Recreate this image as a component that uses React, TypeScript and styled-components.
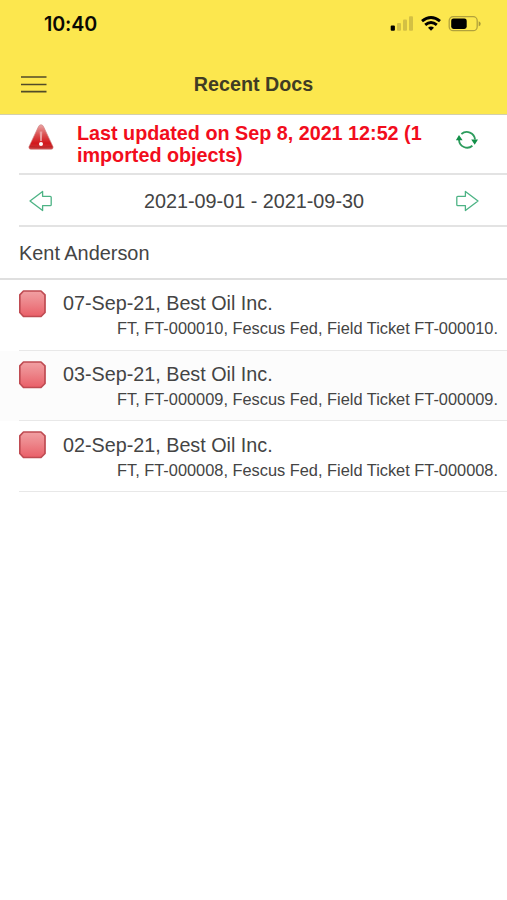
import React from 'react';
import styled, { createGlobalStyle } from 'styled-components';

const GlobalStyle = createGlobalStyle`
  * { box-sizing: border-box; }
  body {
    margin: 0;
    background: #fff;
    font-family: "Liberation Sans", Arial, sans-serif;
    color: #444;
  }
`;

const Screen = styled.main`
  display: flex;
  flex-direction: column;
  width: 507px;
  height: 900px;
  overflow: hidden;
  background: #fff;
`;

const Header = styled.header`
  height: 115px;
  background: #fce74e;
  border-bottom: 1px solid #d3cfad;
`;

const StatusBar = styled.div`
  display: flex;
  align-items: center;
  justify-content: space-between;
  height: 48px;
  padding: 0 25px 0 44px;
`;

const Clock = styled.time`
  font: 600 19.7px/24px Inter, sans-serif;
  letter-spacing: -0.1px;
  color: #090804;
`;

const StatusIcons = styled.svg`
  display: block;
`;

const NavBar = styled.div`
  display: grid;
  grid-template-columns: 60px 1fr 60px;
  align-items: center;
  height: 66px;
  padding: 6px 0 0;
`;

const MenuButton = styled.button`
  width: 26px;
  margin: 0 0 0 21px;
  padding: 0;
  border: 0;
  background: none;
  svg { display: block; }
`;

const Title = styled.h1`
  margin: 0;
  text-align: center;
  font-size: 19.7px;
  line-height: 24px;
  color: #403c24;
`;

const Row = styled.section<{ $height: number }>`
  display: grid;
  grid-template-columns: 44px 1fr 80px;
  height: ${(p) => p.$height}px;
  margin-left: 19px;
  border-bottom: 2px solid #e3e3e3;
`;

const IconCell = styled.div<{ $top: number; $left: number }>`
  padding: ${(p) => p.$top}px 0 0 ${(p) => p.$left}px;
  svg { display: block; }
`;

const Notice = styled.p`
  margin: 0;
  padding: 7px 0 0 14px;
  font-size: 19.75px;
  font-weight: 700;
  line-height: 22px;
  white-space: nowrap;
  color: #f20d1c;
`;

const Period = styled.div`
  align-self: center;
  text-align: center;
  padding: 1px 0 0 18px;
  font-size: 19.8px;
  line-height: 24px;
`;

const Person = styled.h2`
  margin: 0;
  height: 53px;
  padding: 14px 0 0 19px;
  border-bottom: 2px solid #dfdfdf;
  font-size: 19.9px;
  font-weight: 400;
  line-height: 24px;
`;

const DocList = styled.ul`
  margin: 0;
  padding: 0;
  list-style: none;
`;

const DocItem = styled.li<{ $shaded: boolean }>`
  padding-left: 19px;
  background: ${(p) => (p.$shaded ? '#fcfcfc' : '#fff')};
`;

const DocBody = styled.div`
  display: grid;
  grid-template-columns: 44px 1fr;
  height: 70.7px;
  border-bottom: 1.4px solid #e8e8e8;
`;

const StatusMark = styled.div`
  padding-top: 10px;
  svg { display: block; }
`;

const DocTitle = styled.div`
  padding-top: 11.3px;
  font-size: 19.75px;
  line-height: 24px;
`;

const DocDetail = styled.div`
  padding: 2px 0 0 54px;
  font-size: 16.37px;
  line-height: 22px;
  white-space: nowrap;
`;

const docs = [
  { date: '07-Sep-21', number: '000010' },
  { date: '03-Sep-21', number: '000009' },
  { date: '02-Sep-21', number: '000008' },
];

const WarningIcon = () => (
  <svg width="28" height="28" viewBox="0 0 28 28">
    <defs>
      <linearGradient id="warn" x1="0" y1="0" x2="0" y2="1">
        <stop offset="0" stopColor="#eaa5a5" />
        <stop offset=".4" stopColor="#da5050" />
        <stop offset=".75" stopColor="#d3171c" />
        <stop offset="1" stopColor="#c93a3a" />
      </linearGradient>
    </defs>
    <path d="M14 1.8c1.3 0 2 .8 2.600 2l9.200 19.400c.7 1.700.1 3-1.700 3H3.900c-1.800 0-2.400-1.300-1.700-3L11.400 3.800c.6-1.200 1.300-2 2.600-2Z" fill="url(#warn)" stroke="#d08484" strokeWidth=".7" />
    <path d="M2.500 23.500q11.500 1.500 23 0" stroke="#a72023" strokeWidth="1" fill="none" opacity=".5" />
    <path d="M12.700 8.500h2.600l-.5 9.500h-1.600Z" fill="#eaa0a0" />
    <circle cx="14" cy="21" r="2" fill="#fff" />
  </svg>
);

const RefreshIcon = () => (
  <svg width="22" height="20" viewBox="0 0 22 20" fill="none" stroke="#2d9c5d" strokeWidth="1.800">
    <path d="M5.400 4A8.200 8.200 0 0 1 19 9.500M16.400 15.800A8.200 8.200 0 0 1 3 10" />
    <path d="M-.1 10.200 3 5l3.600 5.200ZM15.200 9.400H22l-3.300 5.400Z" fill="#139049" stroke="none" />
  </svg>
);

const ArrowIcon = ({ left = false }: { left?: boolean }) => (
  <svg width="23" height="22" viewBox="0 0 23 22" fill="none" stroke="#4db385" strokeWidth="1.300" strokeLinejoin="round">
    <path d={left ? 'M1 11 13.600 1.400v4.900h7.600q1 0 1 1v7.400q0 1-1 1h-7.600v4.900Z' : 'M22 11 9.400 1.400v4.900H1.800q-1 0-1 1v7.400q0 1 1 1h7.600v4.900Z'} />
  </svg>
);

const RedMark = () => (
  <svg width="28" height="28" viewBox="0 0 28 28">
    <defs>
      <linearGradient id="red-mark" x1="0" y1="0" x2="0" y2="1">
        <stop offset="0" stopColor="#f1a0a3" />
        <stop offset=".45" stopColor="#ed858a" />
        <stop offset="1" stopColor="#e95f68" />
      </linearGradient>
    </defs>
    <path d="M4.500 1h17.500l4 3.800v17.700l-4 4H4.500l-3.700-4V4.800Z" fill="url(#red-mark)" stroke="#bf4b52" strokeWidth="1.700" strokeLinejoin="round" />
  </svg>
);

export default function App() {
  return (
    <Screen>
      <GlobalStyle />
      <Header>
        <StatusBar>
          <Clock>10:40</Clock>
          <StatusIcons width="92" height="18" viewBox="0 0 92 18">
            <rect x=".7" y="10.400" width="4.200" height="5.300" rx="1" fill="#000" />
            <g fill="#d3c044">
              <rect x="7" y="8" width="4" height="7.700" rx="1" />
              <rect x="13" y="4.500" width="4" height="11.200" rx="1" />
              <rect x="19" y="1.200" width="4" height="14.500" rx="1" />
            </g>
            <g fill="none" stroke="#000" strokeWidth="2.900">
              <path d="M32 6.100q9-7.400 18 0M35.200 9.900q5.800-4.700 11.600 0" />
            </g>
            <path d="M38 12.700q3-2.400 6 0L41 15.800Z" fill="#000" />
            <rect x="59.200" y="1.700" width="28" height="14" rx="4" fill="none" stroke="#b2a23c" strokeWidth="1.300" />
            <rect x="61.200" y="3.500" width="15.500" height="10.400" rx="2.300" fill="#000" />
            <path d="M88.700 6.200q2 .5 2 2.500t-2 2.500Z" fill="#a99a36" />
          </StatusIcons>
        </StatusBar>
        <NavBar>
          <MenuButton aria-label="Menu">
            <svg width="26" height="18" viewBox="0 0 26 18" stroke="#514b28" strokeWidth="1.600">
              <path d="M0 2h25.500M0 9.500h25.500M0 16.600h25.500" />
            </svg>
          </MenuButton>
          <Title>Recent Docs</Title>
        </NavBar>
      </Header>
      <Row $height={60}>
        <IconCell $top={8} $left={8}><WarningIcon /></IconCell>
        <Notice>Last updated on Sep 8, 2021 12:52 (1<br />imported objects)</Notice>
        <IconCell $top={15} $left={29}><RefreshIcon /></IconCell>
      </Row>
      <Row $height={52}>
        <IconCell $top={15} $left={10}><ArrowIcon left /></IconCell>
        <Period>2021-09-01 - 2021-09-30</Period>
        <IconCell $top={15} $left={29}><ArrowIcon /></IconCell>
      </Row>
      <Person>Kent Anderson</Person>
      <DocList>
        {docs.map((doc, i) => (
          <DocItem key={doc.number} $shaded={i % 2 === 1}>
            <DocBody>
              <StatusMark><RedMark /></StatusMark>
              <div>
                <DocTitle>{doc.date}, Best Oil Inc.</DocTitle>
                <DocDetail>FT, FT-{doc.number}, Fescus Fed, Field Ticket FT-{doc.number}.</DocDetail>
              </div>
            </DocBody>
          </DocItem>
        ))}
      </DocList>
    </Screen>
  );
}
